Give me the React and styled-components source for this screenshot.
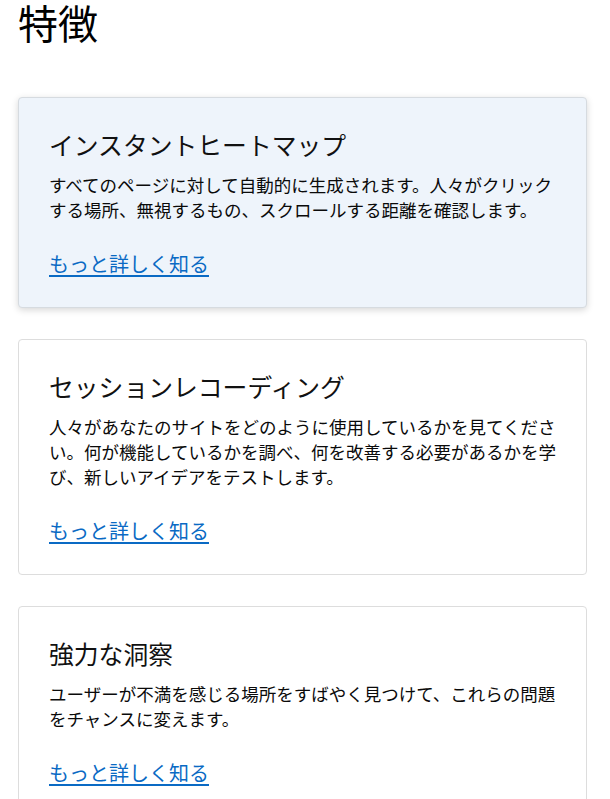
import React from "react";
import styled, { createGlobalStyle } from "styled-components";

const GlobalStyle = createGlobalStyle`
  html, body {
    margin: 0;
    padding: 0;
    background: #ffffff;
  }
  body {
    font-family: "Noto Sans CJK JP", "Noto Sans", sans-serif;
    color: #111;
  }
`;

const Page = styled.main`
  padding: 0 23px 0 18px;
`;

const Heading = styled.h1`
  margin: 0;
  font-size: 40px;
  line-height: 44px;
  font-weight: 400;
  color: #000;
`;

const List = styled.div`
  display: flex;
  flex-direction: column;
  gap: 31px;
  margin-top: 53px;
`;

const Card = styled.section`
  border: 1px solid ${(p) => (p.$active ? "#d6dbe0" : "#dddddd")};
  border-radius: 4px;
  background: ${(p) => (p.$active ? "#eef4fb" : "#ffffff")};
  box-shadow: ${(p) => (p.$active ? "0 2px 7px rgba(0, 0, 0, 0.16)" : "none")};
  padding: 31px 30px 31px 30px;
  display: flex;
  flex-direction: column;
  align-items: flex-start;
`;

const Title = styled.h3`
  margin: 0 0 13px 0;
  font-size: 24.8px;
  line-height: 30px;
  font-weight: 400;
  color: #111;
`;

const Body = styled.p`
  margin: 0 0 29px 0;
  font-size: 17.5px;
  line-height: 25px;
  color: #0a0a0a;
`;

const MoreLink = styled.a`
  font-size: 20px;
  line-height: 25px;
  color: #0a6ac4;
  text-decoration: underline;
  text-decoration-thickness: 2px;
  text-underline-offset: 3px;
`;

const features = [
  {
    title: "インスタントヒートマップ",
    text: "すべてのページに対して自動的に生成されます。人々がクリックする場所、無視するもの、スクロールする距離を確認します。",
    active: true,
  },
  {
    title: "セッションレコーディング",
    text: "人々があなたのサイトをどのように使用しているかを見てください。何が機能しているかを調べ、何を改善する必要があるかを学び、新しいアイデアをテストします。",
  },
  {
    title: "強力な洞察",
    text: "ユーザーが不満を感じる場所をすばやく見つけて、これらの問題をチャンスに変えます。",
  },
];

export default function App() {
  return (
    <>
      <GlobalStyle />
      <Page>
        <Heading>特徴</Heading>
        <List>
          {features.map((f) => (
            <Card key={f.title} $active={f.active}>
              <Title>{f.title}</Title>
              <Body>{f.text}</Body>
              <MoreLink href="#">もっと詳しく知る</MoreLink>
            </Card>
          ))}
        </List>
      </Page>
    </>
  );
}
